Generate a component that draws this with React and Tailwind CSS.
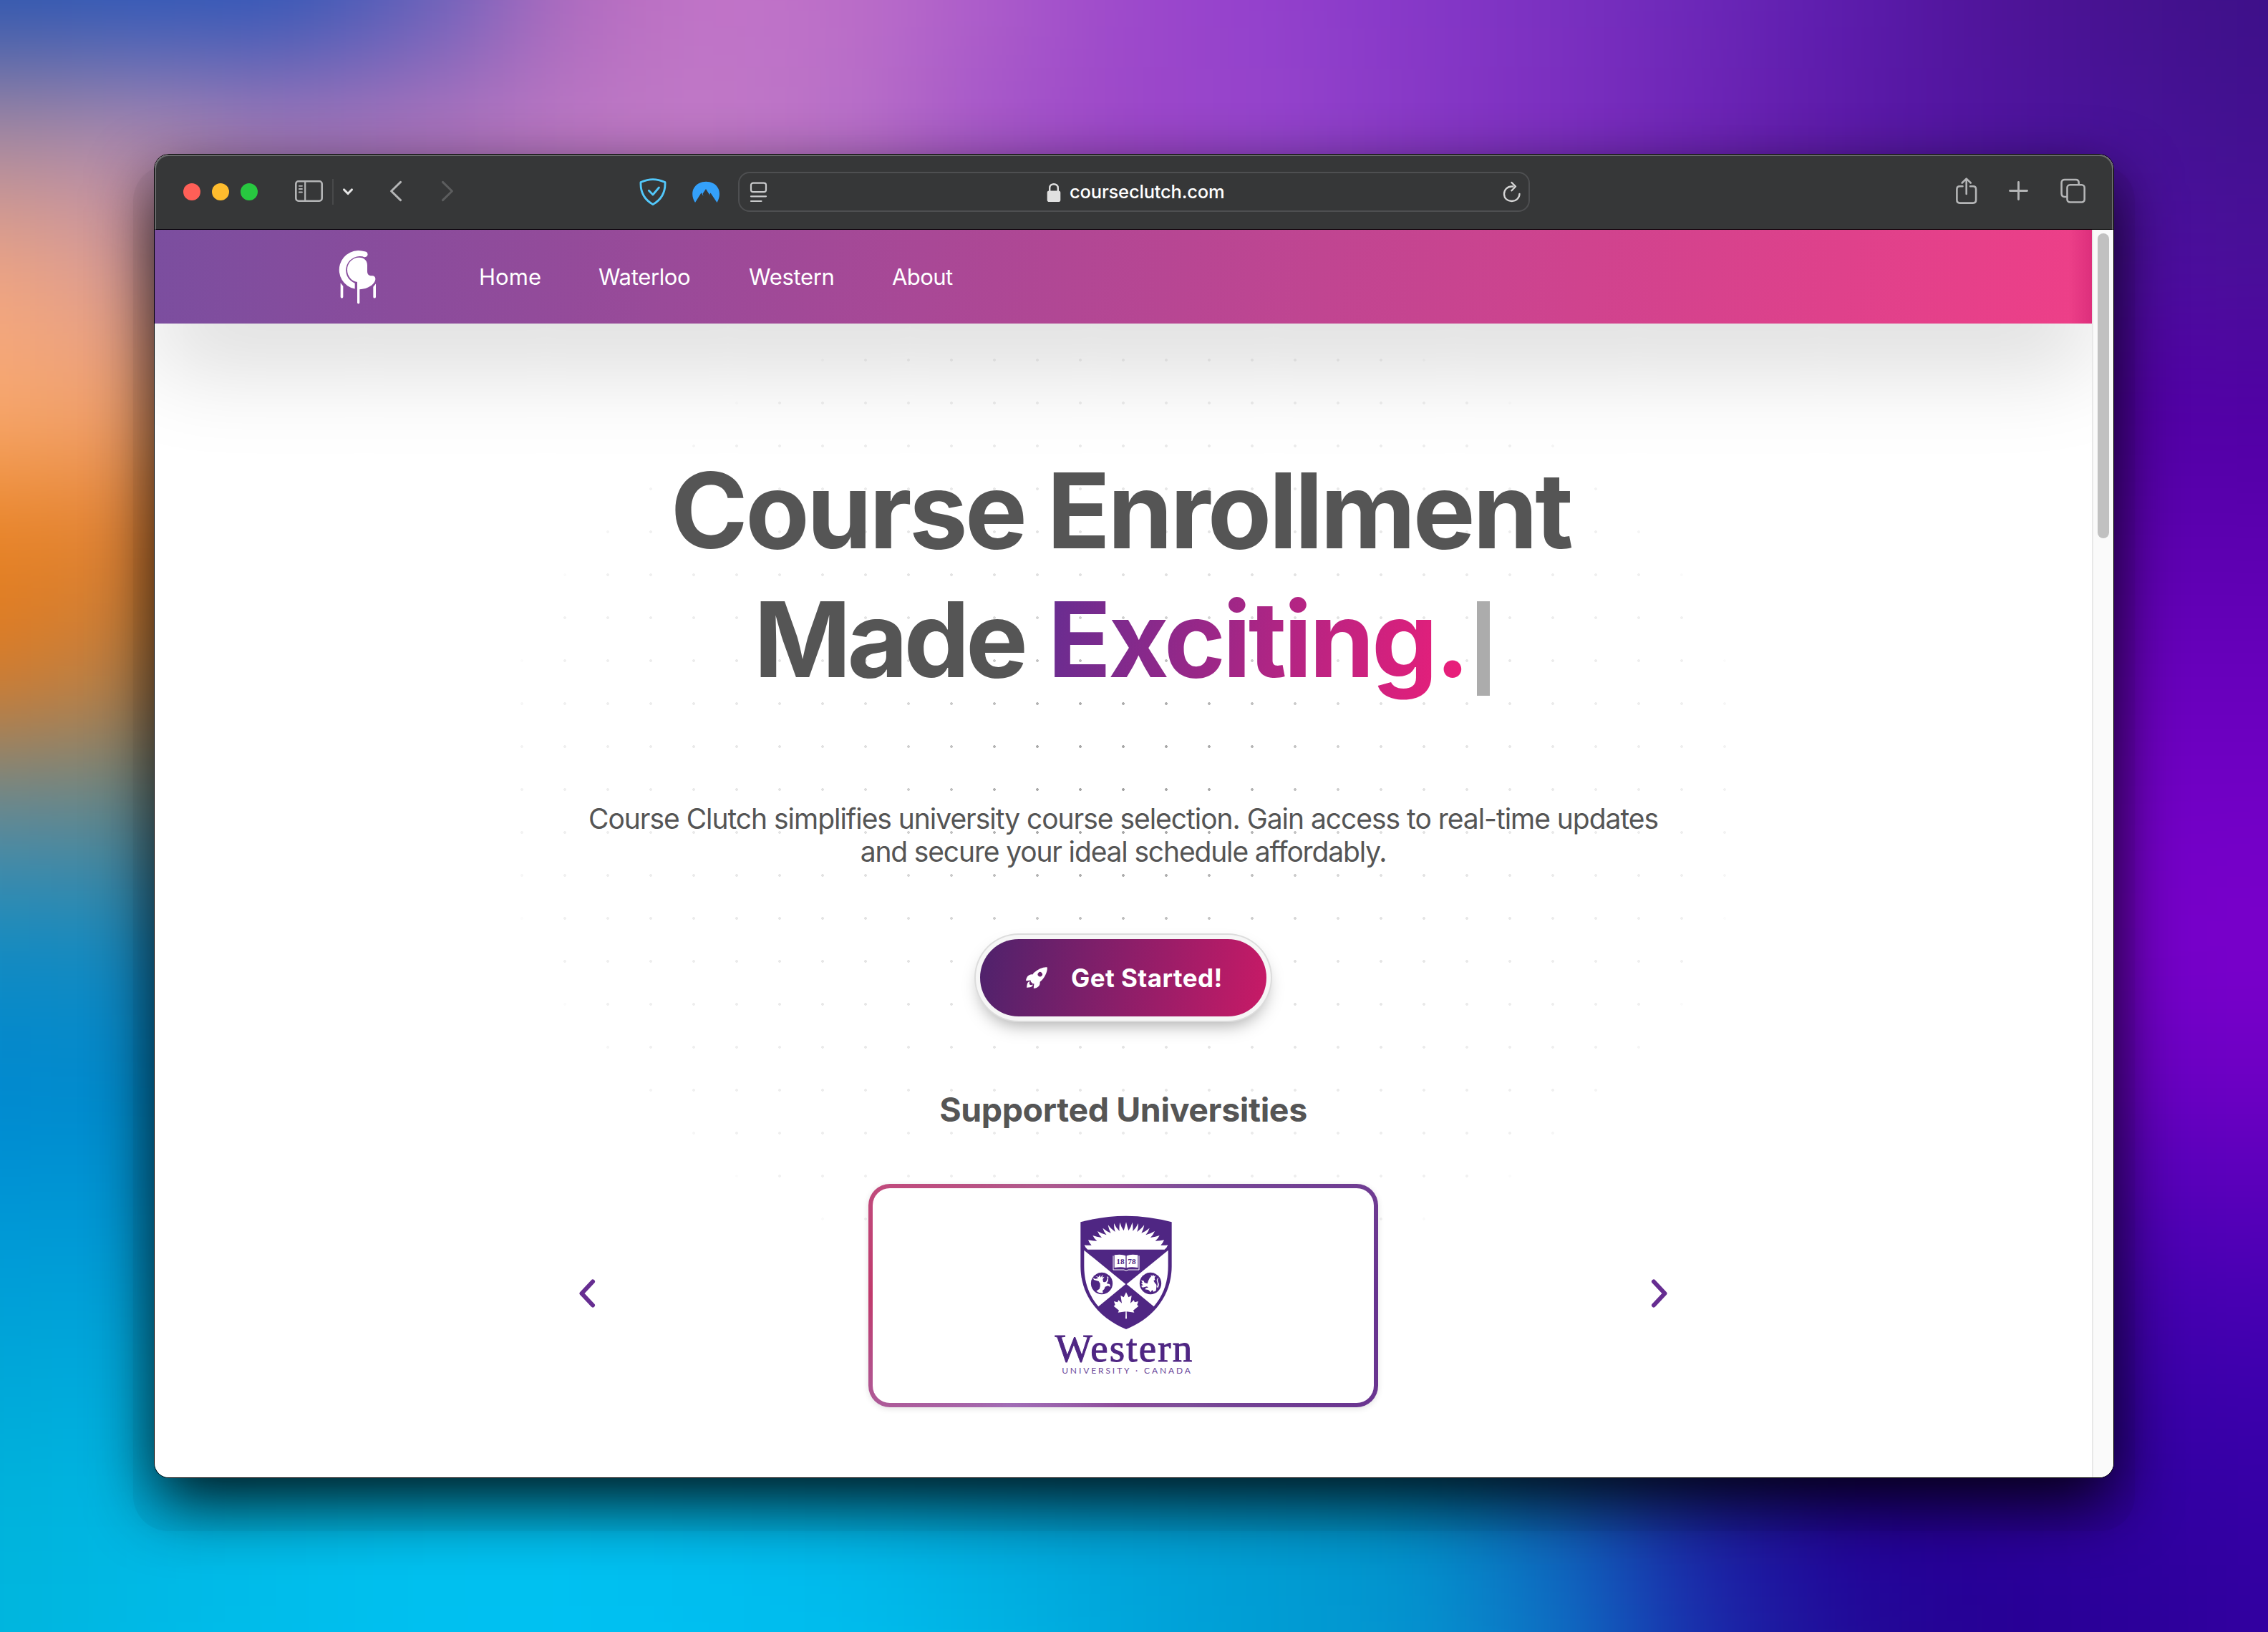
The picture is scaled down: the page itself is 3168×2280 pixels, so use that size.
import { IoRocketSharp } from "react-icons/io5";

const TOP_EDGE = ["#2b55b0", "#2c56b8", "#2e56b6", "#6060ba", "#b06abe", "#c274c8", "#bc6ec8", "#ac5cca", "#9c48cc", "#9340cc", "#8638c8", "#7a30c0", "#6c28b8", "#5c1cae", "#501499", "#46128f", "#3c1088"];
const TOP_INNER = ["#a88aa0", "#a884ac", "#a878b8", "#b074bc", "#bc78c4", "#c07ac6", "#b870c8", "#a455c8", "#9c46c8", "#9444cc", "#8838c6", "#7c2fc0", "#6e24b6", "#5c1aa8", "#5014a0", "#461298", "#421090"];
const LEFT_EDGE = ["#2b55b0", "#a88aa0", "#f2a582", "#f9aa70", "#e8801e", "#d87a28", "#5e8a9c", "#0e8cc4", "#0088d0", "#0098d6", "#00a6d8", "#00b2da", "#00b6de"];
const LEFT_INNER = ["#2c56b8", "#b08ab0", "#d89c98", "#f0a070", "#e08030", "#b88048", "#5c8890", "#1488c0", "#008acc", "#0098d4", "#00a8dc", "#00b6e4", "#00bae6"];
const RIGHT_EDGE = ["#3c1088", "#421090", "#4a1098", "#5000a4", "#5c00b0", "#6800bc", "#7200c6", "#7c00cc", "#6e00c4", "#5400b8", "#4000b0", "#3600a6", "#3200a0"];
const RIGHT_INNER = ["#46128f", "#461298", "#4c0ca0", "#5200a6", "#5c00b0", "#6800bc", "#7200c6", "#7400c8", "#6600c0", "#4c00b4", "#3c00a8", "#3000a0", "#2c009c"];
const BOTTOM_INNER = ["#00b2da", "#00b6e4", "#00bce8", "#00c0ee", "#00c0f0", "#00bcee", "#00b4e6", "#00a8dc", "#00a0d4", "#009cd0", "#0090c8", "#1060b8", "#1c20a0", "#240098", "#2a009a", "#3000a0", "#3600a6"];
const BOTTOM_EDGE = ["#00b6de", "#00bae6", "#00bdec", "#00c0f0", "#00c1f2", "#00bff0", "#00bdee", "#00b4e4", "#00a6dc", "#009cd4", "#0494d0", "#0e70c4", "#1a2cac", "#200c98", "#260094", "#2a0098", "#3200a0"];

const clamp = (v, lo, hi) => Math.min(hi, Math.max(lo, v));

function wallColor(row, col) {
  const r = clamp(row, 0, 12);
  const c = clamp(col, 0, 16);
  if (r === 0) return TOP_EDGE[c];
  if (r === 12) return BOTTOM_EDGE[c];
  if (c === 0) return LEFT_EDGE[r];
  if (c === 16) return RIGHT_EDGE[r];
  if (c === 1) return LEFT_INNER[r];
  if (c === 15) return RIGHT_INNER[r];
  if (r <= 2) return TOP_INNER[c];
  if (r >= 10) return BOTTOM_INNER[c];
  return c < 8 ? LEFT_INNER[r] : RIGHT_INNER[r];
}

const CELLS = [];
for (let r = -1; r <= 13; r++) for (let c = -1; c <= 17; c++) CELLS.push(wallColor(r, c));

function Wallpaper() {
  return (
    <div className="absolute -left-[297px] -top-[285px] grid h-[2850px] w-[3762px] grid-cols-[repeat(19,198px)] grid-rows-[repeat(15,190px)] blur-[85px]">
      {CELLS.map((c, i) => (
        <div key={i} style={{ backgroundColor: c }} />
      ))}
    </div>
  );
}

function Toolbar() {
  const soft = { fill: "none", stroke: "#b4b5b6", strokeLinecap: "round", strokeLinejoin: "round" };
  return (
    <div className="flex h-[105px] shrink-0 items-center border-b border-black bg-[#363738]">
      <div className="ml-10 flex gap-4">
        <span className="size-6 rounded-full bg-[#ff5f57]" />
        <span className="size-6 rounded-full bg-[#febc2e]" />
        <span className="size-6 rounded-full bg-[#28c840]" />
      </div>
      <svg className="ml-[52px] h-10 w-10" viewBox="0 0 40 40" {...soft} strokeWidth="2.6">
        <rect x="1.3" y="5.3" width="36.4" height="27.4" rx="3.6" />
        <path d="M14.2 5.5V32.5" strokeWidth="2.2" />
        <path d="M5.8 11.8H10M5.8 16H10M5.8 20.5H10" strokeWidth="1.8" />
      </svg>
      <span className="ml-3 h-9 w-0.5 bg-[#48494a]" />
      <svg className="ml-3 h-10 w-4" viewBox="0 0 16 40" {...soft} stroke="#e6e6e6" strokeWidth="3.2">
        <path d="M2.6 17L8 22.5L13.4 17" />
      </svg>
      <svg className="ml-[50px] h-10 w-[18px]" viewBox="0 0 18 40" {...soft} strokeWidth="3">
        <path d="M15.5 6.4L2.6 19L15.5 31.6" />
      </svg>
      <svg className="ml-[54px] h-10 w-[18px]" viewBox="0 0 18 40" {...soft} stroke="#5c5d5e" strokeWidth="3">
        <path d="M2.5 6.4L15.4 19L2.5 31.6" />
      </svg>
      <svg className="ml-[258px] h-10 w-10" viewBox="0 0 40 40" {...soft} stroke="#52c8fb" strokeWidth="2.8">
        <path d="M20 2.6C25.5 2.6 31 4 37 6.6C37.6 20 32.5 30.5 20 37.6C7.5 30.5 2.4 20 3 6.6C9 4 14.5 2.6 20 2.6Z" />
        <path d="M14.3 18.2L20 24L28.5 14" />
      </svg>
      <svg className="ml-[34px] h-10 w-10" viewBox="0 0 40 40" fill="#34a0fa">
        <path d="M5 35C-1.5 24.5 .6 14 9.5 8.6C16 4.7 24.5 4.7 31 8.6C39.6 14 41.5 24.5 35.5 35L26.5 21.4L25.3 23.4L26 25.5L20 16L15.6 22.4L16.5 26L13.6 21.2Z" />
      </svg>
      <div className="ml-[25px] flex h-14 w-[1106px] items-center rounded-2xl border-2 border-[#4e4f51] pr-2">
        <svg className="ml-[14px] h-10 w-[26px]" viewBox="0 0 26 40" {...soft} stroke="#c9cacb" strokeWidth="2.2">
          <rect x="2" y="7.6" width="21" height="12.6" rx="3" />
          <path d="M2 26.3H23M2 33H16.5" />
        </svg>
        <svg className="ml-[389px] h-10 w-5" viewBox="0 0 20 40">
          <rect x="0.7" y="18.5" width="18.6" height="15.5" rx="2.8" fill="#e0e0e0" />
          <path d="M4.2 19V14.5C4.2 7.4 15.8 7.4 15.8 14.5V19" fill="none" stroke="#e0e0e0" strokeWidth="2.4" />
        </svg>
        <span className="ml-3 whitespace-nowrap text-[25.5px] font-medium leading-10 tracking-[-0.19px] text-white">courseclutch.com</span>
        <svg className="ml-auto h-10 w-[30px]" viewBox="0 0 30 40" {...soft} stroke="#d6d6d6" strokeWidth="2.3">
          <path d="M16.5 12.5H14.5C8.5 12.5 4 17 4 23S8.5 33 14.7 33S25.5 28.5 25.5 22.8" />
          <path d="M14.5 7L20 12.5L14.5 18.3" />
        </svg>
      </div>
      <svg className="ml-[594px] h-10 w-8" viewBox="0 0 32 40" {...soft} strokeWidth="2.6">
        <path d="M10.5 12.3H6.5Q2.4 12.3 2.4 16.4V31.5Q2.4 35.6 6.5 35.6H25Q29.1 35.6 29.1 31.5V16.4Q29.1 12.3 25 12.3H21" />
        <path d="M15.7 23V2.5M9.7 7.5L15.7 1.6L21.7 7.5" />
      </svg>
      <svg className="ml-[42px] h-10 w-[30px]" viewBox="0 0 30 40" {...soft} strokeWidth="2.9">
        <path d="M2.5 18.5H26.5M14.5 6.5V30.5" />
      </svg>
      <svg className="ml-[42px] h-10 w-[38px]" viewBox="0 0 38 40" {...soft} strokeWidth="2.6">
        <rect x="10.5" y="10.3" width="24.2" height="24.2" rx="4" />
        <path d="M10 27H7Q2.6 27 2.6 22.6V7.3Q2.6 3 7 3H22.5Q26.7 3 26.7 7.3V9.5" />
      </svg>
    </div>
  );
}

function Logo() {
  return (
    <svg className="ml-[257px] mt-[1px] h-[77px] w-[53px]" viewBox="818 448 159 231" fill="#fff">
      <path d="M932 457A81 81 0 1 0 886 611.5V588A58 58 0 1 1 928 479Z" />
      <circle cx="928" cy="467" r="11.5" />
      <path d="M904 480C926 480 938 494 938 512V538C938 552 946 557 957 557C967 556 973 562 972 572C970 594 938 613 906 614V671A5.5 5.5 0 0 1 896 671V583C870 578 854 557 854 531C854 503 876 480 904 480Z" />
      <path d="M826 587L837 600V645A5.5 5.5 0 0 1 826 645ZM974 590L963 603V645A5.5 5.5 0 0 0 974 645Z" />
    </svg>
  );
}

/* Left half of the sunburst: each ray's tip and the valley that follows it. */
const RAYS = [
  [222, 212, 252, 213],
  [238, 191, 275, 195],
  [257, 172, 295, 181],
  [277, 154, 315, 170],
  [299, 141, 333, 162],
  [321, 128, 351, 157],
  [346, 121, 369, 154],
  [371, 117, 387, 152],
];
const sunPath = (() => {
  const pts = [[236, 231.5]];
  RAYS.forEach(([tx, ty, vx, vy]) => pts.push([tx, ty], [vx, vy]));
  const curve = (p, q, flip) => {
    const mx = (p[0] + q[0]) / 2 - 3;
    const my = (p[1] + q[1]) / 2 + 2;
    const end = flip ? 794 - q[0] : q[0];
    return `Q${flip ? 794 - mx : mx} ${my} ${end} ${q[1]}`;
  };
  let d = "M236 231.5";
  for (let i = 1; i < pts.length; i++) d += curve(pts[i - 1], pts[i], false);
  d += "Q392 136 397 116Q402 136 407 152";
  for (let i = pts.length - 1; i > 0; i--) d += curve(pts[i], pts[i - 1], true);
  return d + "Z";
})();

function WesternCrest() {
  return (
    <svg className="h-[160px] w-[128px]" viewBox="205 88 384 480">
      <path d="M206 116Q397 64 588 116V300C588 430 505 522 397 565C289 522 206 430 206 300Z" fill="#4f2683" />
      <path d={sunPath} fill="#fff" />
      <path d="M221 234L395 376L281 470C240 422 221 365 221 300ZM573 234L399 376L513 470C554 422 573 365 573 300Z" fill="#fff" />
      <path d="M343 257V316H388Q397 323 406 316H451V257" fill="none" stroke="#fff" strokeWidth="3" />
      <path d="M348 254Q378 249 395 257V308Q378 302 348 307ZM446 254Q416 249 399 257V308Q416 302 446 307Z" fill="#fff" />
      <text x="356" y="292" fontSize="33" textLength="34" lengthAdjust="spacingAndGlyphs" fill="#4f2683" className="font-['Liberation_Serif',serif] font-bold">18</text>
      <text x="404" y="292" fontSize="33" textLength="34" lengthAdjust="spacingAndGlyphs" fill="#4f2683" className="font-['Liberation_Serif',serif] font-bold">78</text>
      <circle cx="295" cy="373" r="45.5" fill="#4f2683" />
      <circle cx="499" cy="373" r="45.5" fill="#4f2683" />
      <path d="M258 350Q270 358 280 350L268 342L282 346L287 338L290 348L300 336L297 348L306 345L299 355L301 366Q308 370 314 364L319 352L316 343L323 347L321 364L315 373L328 376L331 388L321 383L309 387Q308 396 298 404L300 413Q286 416 272 405L285 396Q290 386 288 374L282 364L262 358Z" fill="#fff" />
      <path d="M496 350L502 344L500 338L507 342L511 336L514 343L521 340L516 350L518 358L512 362L518 372Q526 378 524 388L522 404L512 408L506 400L500 410L490 400L476 398L480 392L490 390L484 386L466 390L460 384L468 380L460 374L466 370L460 360L470 362L474 370L486 374L490 362ZM536 350Q526 354 531 366Q538 378 530 392L526 388Q532 376 526 364Q522 352 536 350Z" fill="#fff" />
      <path d="M397 410L387 431L374 424L379 456L365 443L361 452L346 448L351 463L345 468L367 486L363 495L395 491L394 521H400L399 491L431 495L427 486L449 468L443 463L448 448L433 452L429 443L415 456L420 424L407 431Z" fill="#fff" />
    </svg>
  );
}

function UniversityCard() {
  return (
    <div className="h-[312px] w-[712px] rounded-[30px] bg-[conic-gradient(from_0deg,#984f96_0deg,#7c4d98_30deg,#6f3c92_66deg,#66338f_90deg,#6a3590_114deg,#7c4d98_150deg,#8c4a98_180deg,#a06cb5_226deg,#ad5a98_246deg,#c03a6c_270deg,#c04a7c_294deg,#b05a8c_320deg,#984f96_360deg)] p-1.5 shadow-[0_2px_8px_rgba(0,0,0,0.12)]">
      <div className="flex h-full flex-col items-center rounded-3xl bg-white pl-[7px] pt-[38px]">
        <WesternCrest />
        <div className="mt-[3px] whitespace-nowrap pr-1 text-[55px] leading-[46px] tracking-[2.1px] text-[#4f2683] [-webkit-text-stroke:1px_#4f2683] font-['Liberation_Serif',serif]">Western</div>
        <div className="whitespace-nowrap pl-1 text-[12px] leading-4 tracking-[2.9px] text-[#6b489a] font-['Lato',sans-serif]">UNIVERSITY · CANADA</div>
      </div>
    </div>
  );
}

function Arrow({ d }) {
  return (
    <svg className="h-10 w-6" viewBox="0 0 24 40" fill="none" stroke="#662d91" strokeWidth="6" strokeLinecap="round" strokeLinejoin="round">
      <path d={d} />
    </svg>
  );
}

function Hero() {
  return (
    <main className="relative flex flex-1 flex-col text-[#555]">
      <div className="absolute inset-0 bg-[radial-gradient(circle_at_center,#999_0,#999_1.6px,transparent_2.2px)] bg-[length:60px_60px] [background-position:3px_21px] [mask-image:radial-gradient(ellipse_880px_700px_at_1353px_650px,rgba(0,0,0,0.9)_0,rgba(0,0,0,0.8)_18%,rgba(0,0,0,0.3)_42%,rgba(0,0,0,0.18)_75%,rgba(0,0,0,0.14)_95%,transparent_100%)]" />
      <div className="relative flex flex-col">
        <h1 className="mt-[171px] text-[146px] font-bold leading-[180px]">
          <span className="block pr-[7px] text-center tracking-[-3.684px]">Course Enrollment</span>
          <span className="flex items-center pl-[837px]">
            <span className="tracking-[-5.6px]">Made</span>
            <span className="ml-[33px] bg-[linear-gradient(100deg,#662d91,#ed1e79)] bg-clip-text tracking-[-3.887px] text-transparent">Exciting.</span>
            <span className="ml-[14px] mt-[26px] h-[132px] w-[18px] bg-[#acacac]" />
          </span>
        </h1>
        <p className="mt-[138px] whitespace-nowrap text-center text-[39px] leading-[46px]">
          <span className="block tracking-[-1.035px]">Course Clutch simplifies university course selection. Gain access to real-time updates</span>
          <span className="block tracking-[-1.158px]">and secure your ideal schedule affordably.</span>
        </p>
        <button className="mt-[99px] flex h-[108px] w-[400px] items-center self-center rounded-full bg-[linear-gradient(100deg,#4e226c,#c81a66)] text-[35px] font-bold text-white shadow-[0_0_0_6px_#f6f6f6,0_0_0_8px_#dcdcdc,0_12px_24px_rgba(0,0,0,0.34)]">
          <IoRocketSharp className="ml-[62px] size-[34px]" />
          <span className="ml-[31px] whitespace-nowrap tracking-[0.43px]">Get Started!</span>
        </button>
        <h2 className="mt-[102px] text-center text-[46.5px] font-bold leading-[56px] tracking-[-0.391px]">Supported Universities</h2>
        <div className="mt-[76px] flex items-center justify-between pl-[593px] pr-[593px]">
          <div className="pb-[6px]"><Arrow d="M19 3.5L3.5 20L19 36.5" /></div>
          <UniversityCard />
          <div className="pb-[6px]"><Arrow d="M5 3.5L20.5 20L5 36.5" /></div>
        </div>
      </div>
    </main>
  );
}

export default function App() {
  return (
    <div className="relative h-[2280px] w-[3168px] overflow-hidden font-['Inter',sans-serif]">
      <Wallpaper />
      <div className="relative px-[216px] pt-[216px]">
        <div className="rounded-[20px] shadow-[0_0_0_1px_#000,0_36px_90px_rgba(0,0,0,0.88),0_45px_0_30px_rgba(0,0,0,0.04)]">
          <div className="relative flex h-[1848px] w-[2736px] flex-col overflow-hidden rounded-[20px] bg-white">
            <Toolbar />
            <div className="flex min-h-0 flex-1">
              <div className="flex w-[2706px] flex-col overflow-hidden">
                <nav className="relative z-10 flex h-[131px] shrink-0 items-center bg-[linear-gradient(98deg,#7b4e9f,#ee3f88)] text-[31px] text-white shadow-[0_60px_130px_0px_rgba(0,0,0,0.15)]">
                  <Logo />
                  <div className="ml-[143px] mt-[1px] flex items-center">
                    <span className="w-[167px] tracking-[0.04px]">Home</span>
                    <span className="w-[210px] tracking-[-0.349px]">Waterloo</span>
                    <span className="w-[200px] tracking-[-0.329px]">Western</span>
                    <span className="tracking-[-0.572px]">About</span>
                  </div>
                  <div className="ml-auto h-full w-8 bg-gradient-to-r from-transparent to-[#cc1f70]/50" />
                </nav>
                <Hero />
              </div>
              <div className="w-[30px] border-l-2 border-[#e8e8e8] bg-[#fafafa] pl-1.5 pt-[5px]">
                <div className="h-[426px] w-4 rounded-full bg-[#c1c1c1]" />
              </div>
            </div>
            <div className="pointer-events-none absolute inset-0 rounded-[20px] shadow-[inset_0_0_0_2px_rgba(255,255,255,0.25)]" />
          </div>
        </div>
      </div>
    </div>
  );
}
